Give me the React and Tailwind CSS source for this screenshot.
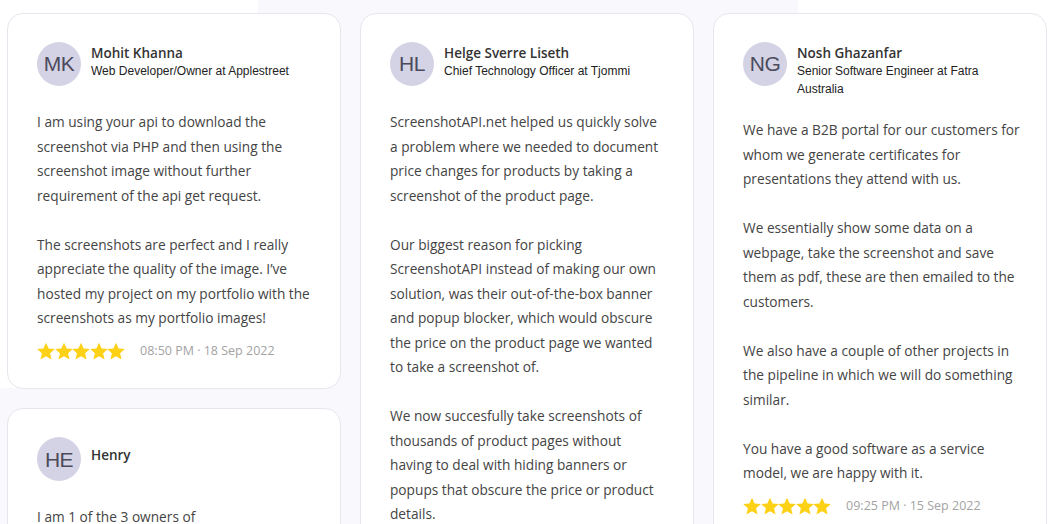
import React from 'react';

const reviews = [
    [
        {
            initials: 'MK',
            name: 'Mohit Khanna',
            title: 'Web Developer/Owner at Applestreet',
            body: [
                'I am using your api to download the screenshot via PHP and then using the screenshot image without further requirement of the api get request.',
                'The screenshots are perfect and I really appreciate the quality of the image. I’ve hosted my project on my portfolio with the screenshots as my portfolio images!'
            ],
            date: '08:50 PM · 18 Sep 2022'
        },
        {
            initials: 'HE',
            name: 'Henry',
            title: '',
            body: [
                'I am 1 of the 3 owners of ProductPriceTracker.com, a price comparison website. We use ScreenshotAPI to make screenshots of products.'
            ],
            date: '10:12 AM · 12 Sep 2022'
        }
    ],
    [
        {
            initials: 'HL',
            name: 'Helge Sverre Liseth',
            title: 'Chief Technology Officer at Tjommi',
            body: [
                'ScreenshotAPI.net helped us quickly solve a problem where we needed to document price changes for products by taking a screenshot of the product page.',
                'Our biggest reason for picking ScreenshotAPI instead of making our own solution, was their out-of-the-box banner and popup blocker, which would obscure the price on the product page we wanted to take a screenshot of.',
                'We now succesfully take screenshots of thousands of product pages without having to deal with hiding banners or popups that obscure the price or product details.'
            ],
            date: '11:40 AM · 20 Sep 2022'
        }
    ],
    [
        {
            initials: 'NG',
            name: 'Nosh Ghazanfar',
            title: 'Senior Software Engineer at Fatra Australia',
            wide: true,
            body: [
                'We have a B2B portal for our customers for whom we generate certificates for presentations they attend with us.',
                'We essentially show some data on a webpage, take the screenshot and save them as pdf, these are then emailed to the customers.',
                'We also have a couple of other projects in the pipeline in which we will do something similar.',
                'You have a good software as a service model, we are happy with it.'
            ],
            date: '09:25 PM · 15 Sep 2022'
        }
    ]
];

function Star() {
    return (
        <svg width="18" height="18" viewBox="1 1.2 22 21" className="shrink-0 -mr-[0.4px]">
            <path fill="#fcd116" d="M12 1.6l3.2 7 7.6.7-5.8 5.1 1.8 7.6L12 18.1l-6.8 3.9 1.8-7.6-5.8-5.1 7.6-.7z" />
        </svg>
    );
}

function ReviewCard({ review }) {
    return (
        <div className={`bg-white border border-[#e6e7ee] rounded-[16px] pt-[28px] pl-[29px] ${review.wide ? 'pr-[23px]' : 'pr-[27px]'} pb-[28px]`}>
            <div className="flex items-start gap-[10px]">
                <div className="w-[44px] h-[44px] rounded-full bg-[#d4d3e5] flex items-center justify-center shrink-0 text-[21px] text-[#4b4b5c] font-['Liberation_Sans',sans-serif] tracking-[-0.5px]">
                    {review.initials}
                </div>
                <div className={review.title ? 'pt-[2px] pr-[4px]' : 'pt-[9px]'}>
                    <div className="text-[13.5px] leading-[18px] font-semibold text-[#333] font-['Open_Sans',sans-serif]">{review.name}</div>
                    {review.title && (
                        <div className="text-[12px] leading-[18px] text-[#222] font-['Liberation_Sans',sans-serif]">{review.title}</div>
                    )}
                </div>
            </div>
            <div className={`${review.wide ? 'mt-[20px]' : 'mt-[24px]'} text-[13.7px] leading-[24.5px] text-[#444] font-['Open_Sans',sans-serif] flex flex-col gap-[24.5px]`}>
                {review.body.map((p, i) => (
                    <p key={i}>{p}</p>
                ))}
            </div>
            <div className="mt-[11px] flex items-center gap-[15px]">
                <div className="flex">
                    <Star /><Star /><Star /><Star /><Star />
                </div>
                <span className="text-[12.5px] text-[#a3a3a3] font-['Open_Sans',sans-serif]">{review.date}</span>
            </div>
        </div>
    );
}

export default function App() {
    return (
        <div className="relative h-[524px] overflow-hidden bg-white">
            <div className="absolute left-[258px] top-0 w-[540px] h-full bg-[#f8f8fd]" />
            <div className="absolute left-0 top-[388px] w-[260px] h-[140px] bg-[#f8f8fd]" />
            <div className="relative flex gap-[19px] pl-[7px] pt-[13px]">
                {reviews.map((col, i) => (
                    <div key={i} className="w-[334px] shrink-0 flex flex-col gap-[19px]">
                        {col.map(r => (
                            <ReviewCard key={r.initials} review={r} />
                        ))}
                    </div>
                ))}
            </div>
        </div>
    );
}
